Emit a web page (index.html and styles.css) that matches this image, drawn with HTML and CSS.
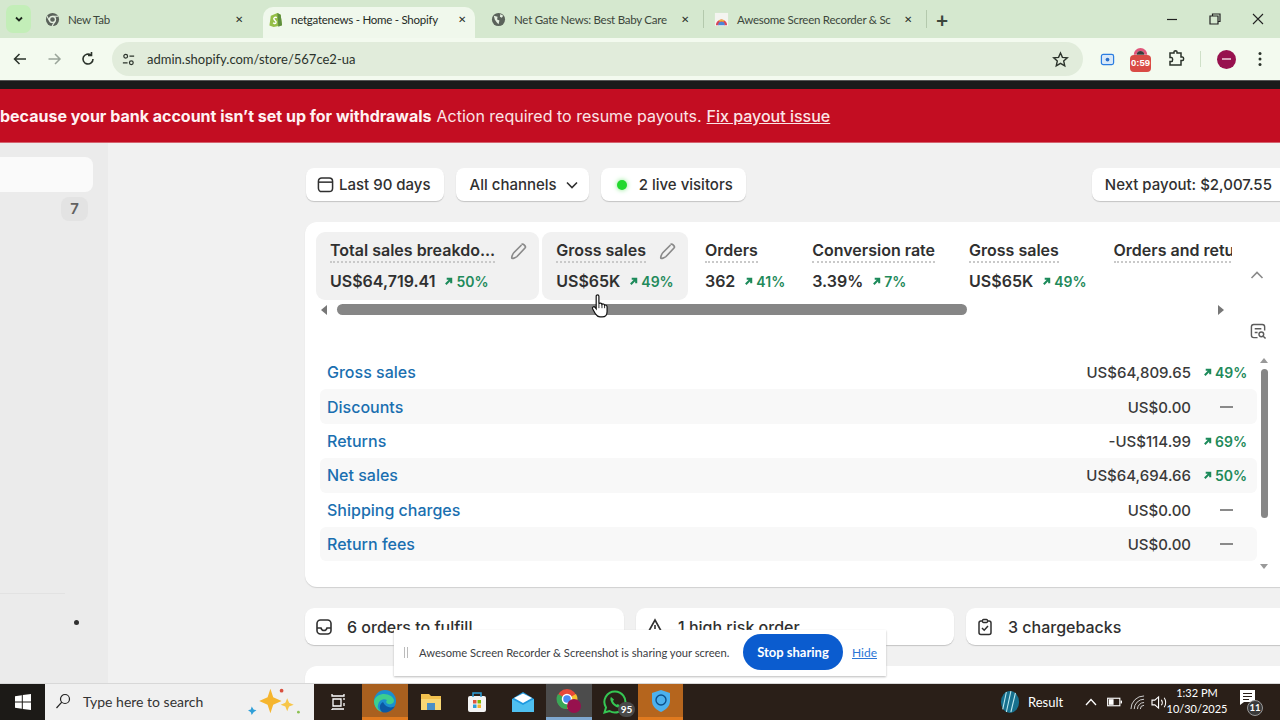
FILE: index.html
```html
<!DOCTYPE html>
<html lang="en">
<head>
  <meta charset="UTF-8">
  <title>netgatenews - Home - Shopify</title>
  <link rel="stylesheet" href="styles.css">
</head>
<body>

  <!-- Browser tabs -->
  <div class="tabstrip">
    <div class="tab-search">
      <svg width="10" height="10" viewBox="0 0 10 10"><path d="M2 3.5 5 6.5 8 3.5" fill="none" stroke="#1f2a1f" stroke-width="1.8"/></svg>
    </div>
    <div class="tab">
      <svg class="favicon" viewBox="0 0 16 16"><circle cx="8" cy="8" r="7" fill="#5a625a"/><circle cx="8" cy="8" r="3.2" fill="#5a625a" stroke="#e4efe0" stroke-width="1.4"/><path d="M8 4.5H14M5 9.8 2.2 4.6M10.8 9.8 7.6 14.8" stroke="#e4efe0" stroke-width="1.2"/></svg>
      <span class="tab-title">New Tab</span>
      <span class="tab-close">✕</span>
    </div>
    <div class="tab active">
      <svg class="favicon" viewBox="0 0 16 16"><path d="M3 4 10 1 13.5 3 15 14 6 16 1.500 14.500Z" fill="#95bf47"/><path d="M10 1 11 15.700 15 14 13.500 3Z" fill="#5e8e3e"/><path d="M9.500 6C7 5 5.500 6.500 6.500 8S9.500 10 8.500 11.500 6 12 5.500 11.500" fill="none" stroke="#fff" stroke-width="1.500"/></svg>
      <span class="tab-title">netgatenews - Home - Shopify</span>
      <span class="tab-close">✕</span>
    </div>
    <div class="tab">
      <svg class="favicon" viewBox="0 0 16 16"><circle cx="8" cy="8" r="7" fill="#5a625a"/><path d="M3 4 7 5 6.500 8 9 9 8 13 6 11 4 8ZM10 2 13 4 11.500 6 9.500 5Z" fill="#e4efe0"/></svg>
      <span class="tab-title">Net Gate News: Best Baby Care</span>
      <span class="tab-close">✕</span>
    </div>
    <div class="tab-sep"></div>
    <div class="tab">
      <svg class="favicon" viewBox="0 0 16 16"><rect x="1" y="1" width="14" height="14" fill="#f4f4f0"/><path d="M2 14A6 6 0 0 1 14 14H11A3 3 0 0 0 5 14Z" fill="#d8475a"/><path d="M4.500 14A3.500 3.500 0 0 1 11.500 14Z" fill="#4a86d8"/><path d="M5 8.800A6 6 0 0 1 11 8.800L10 10.500A3.500 3.500 0 0 0 6 10.500Z" fill="#f0b93a"/></svg>
      <span class="tab-title">Awesome Screen Recorder &amp; Sc</span>
      <span class="tab-close">✕</span>
    </div>
    <div class="tab-sep"></div>
    <span class="tab-new">+</span>
    <div class="window-btns">
      <svg width="12" height="12" viewBox="0 0 12 12"><path d="M1 6.500H11" stroke="#222" stroke-width="1.200"/></svg>
      <svg width="12" height="12" viewBox="0 0 12 12"><path d="M3.500 2.800V1H11V8.500H9M1 3H9V11H1Z" fill="none" stroke="#222" stroke-width="1.200"/></svg>
      <svg width="12" height="12" viewBox="0 0 12 12"><path d="M1 1 11 11M11 1 1 11" stroke="#222" stroke-width="1.100"/></svg>
    </div>
  </div>

  <!-- Address bar -->
  <div class="toolbar">
    <svg class="nav-icon" viewBox="0 0 16 16"><path d="M14 8H2.500M7.500 3 2.500 8 7.500 13" fill="none" stroke="#2b332b" stroke-width="1.500"/></svg>
    <svg class="nav-icon" viewBox="0 0 16 16"><path d="M14 8H2.500M9 3 14 8 9 13" fill="none" stroke="#9aa59a" stroke-width="1.500"/></svg>
    <svg class="nav-icon" viewBox="0 0 16 16"><path d="M13 8A5 5 0 1 1 11 4M11.500 1V4.500H8" fill="none" stroke="#2b332b" stroke-width="1.600"/></svg>
    <div class="omnibox">
      <svg class="site-icon" viewBox="0 0 16 16"><circle cx="5" cy="4.500" r="2" fill="none" stroke="#2b332b" stroke-width="1.300"/><path d="M9 4.500H14M2 11.500H7" stroke="#2b332b" stroke-width="1.300"/><circle cx="11" cy="11.500" r="2" fill="none" stroke="#2b332b" stroke-width="1.300"/></svg>
      <span class="url">admin.shopify.com/store/567ce2-ua</span>
      <svg class="star" viewBox="0 0 16 16"><path d="M8 1.800 9.800 6 14.400 6.400 11 9.400 12 14 8 11.600 4 14 5 9.400 1.600 6.400 6.200 6Z" fill="none" stroke="#2b332b" stroke-width="1.300"/></svg>
    </div>
    <div class="ext-icons">
      <svg class="ext-cast" viewBox="0 0 16 16"><rect x="1.500" y="2.500" width="13" height="11" rx="2" fill="#d8e8f8" stroke="#2a7de1" stroke-width="1.300"/><circle cx="8" cy="8" r="2" fill="#2a6fc9"/></svg>
      <div class="ext-timer">
        <svg class="ext-rainbow" viewBox="0 0 20 10"><path d="M2 10A8 8 0 0 1 18 10H14.500A4.500 4.500 0 0 0 5.500 10Z" fill="#e0567a"/><path d="M5.500 10A4.500 4.500 0 0 1 14.500 10Z" fill="#3b3b3b"/></svg>
        <span class="timer-label">0:59</span>
      </div>
      <svg class="ext-puzzle" viewBox="0 0 18 18"><path d="M3 3H7V1.800C7 .5 10 .5 10 1.800V3H14V7H15.500C17 7 17 10.500 15.500 10.500H14V15H3V11.500H4.500C6 11.500 6 7.500 4.500 7.500H3Z" fill="none" stroke="#2b332b" stroke-width="1.500"/></svg>
      <div class="toolbar-sep"></div>
      <div class="avatar"><span class="avatar-mark"></span></div>
      <svg class="menu-dots" viewBox="0 0 4 16"><circle cx="2" cy="2.500" r="1.500"/><circle cx="2" cy="8" r="1.500"/><circle cx="2" cy="13.500" r="1.500"/></svg>
    </div>
  </div>
  <div class="blackbar"></div>

  <!-- Payout banner -->
  <div class="banner">
    <strong>because your bank account isn’t set up for withdrawals</strong>
    Action required to resume payouts.
    <a class="banner-link" href="#">Fix payout issue</a>
  </div>

  <div class="main">
    <!-- Sidebar, mostly cut off -->
    <div class="sidebar">
      <div class="side-selected"></div>
      <span class="side-badge">7</span>
      <div class="side-rule"></div>
      <span class="side-dot"></span>
    </div>

    <div class="content">
      <div class="filters">
        <div class="pill">
          <svg class="pill-icon" viewBox="0 0 18 18"><rect x="1.500" y="2" width="15" height="14.500" rx="3.500" fill="none" stroke="#303030" stroke-width="1.600"/><path d="M1.500 6.500H16.500" stroke="#303030" stroke-width="1.600"/></svg>
          Last 90 days
        </div>
        <div class="pill pill-channels">
          All channels
          <svg class="pill-caret" viewBox="0 0 14 14"><path d="M2 4.500 7 9.500 12 4.500" fill="none" stroke="#303030" stroke-width="1.600"/></svg>
        </div>
        <div class="pill">
          <span class="live-dot"></span>
          2 live visitors
        </div>
        <div class="pill pill-payout">Next payout: $2,007.55</div>
      </div>

      <div class="card">
        <div class="card-top">
          <div class="metrics-wrap">
            <div class="metrics">
              <div class="metric selected">
                <div class="metric-head">
                  <span class="metric-label label-long">Total sales breakdo...</span>
                  <svg class="pencil" viewBox="0 0 18 18"><path d="M11.500 2.500C13 1 16.500 4.500 15 6L7 14.500C5.500 16 2 17 1.800 16S2.500 12 4 10.500L11.500 3" fill="none" stroke="#8a8a8a" stroke-width="1.700"/></svg>
                </div>
                <div class="metric-value">US$64,719.41 <span class="pct"><svg class="up" viewBox="0 0 10 10"><path d="M2 8 8 2M3 2H8V7" fill="none" stroke="#1c8a5a"/></svg>50%</span></div>
              </div>
              <div class="metric selected">
                <div class="metric-head">
                  <span class="metric-label">Gross sales</span>
                  <svg class="pencil" viewBox="0 0 18 18"><path d="M11.500 2.500C13 1 16.500 4.500 15 6L7 14.500C5.500 16 2 17 1.800 16S2.500 12 4 10.500L11.500 3" fill="none" stroke="#8a8a8a" stroke-width="1.700"/></svg>
                </div>
                <div class="metric-value">US$65K <span class="pct"><svg class="up" viewBox="0 0 10 10"><path d="M2 8 8 2M3 2H8V7" fill="none" stroke="#1c8a5a"/></svg>49%</span></div>
              </div>
              <div class="metric">
                <div class="metric-head"><span class="metric-label">Orders</span></div>
                <div class="metric-value">362 <span class="pct"><svg class="up" viewBox="0 0 10 10"><path d="M2 8 8 2M3 2H8V7" fill="none" stroke="#1c8a5a"/></svg>41%</span></div>
              </div>
              <div class="metric metric-wide">
                <div class="metric-head"><span class="metric-label">Conversion rate</span></div>
                <div class="metric-value">3.39% <span class="pct"><svg class="up" viewBox="0 0 10 10"><path d="M2 8 8 2M3 2H8V7" fill="none" stroke="#1c8a5a"/></svg>7%</span></div>
              </div>
              <div class="metric">
                <div class="metric-head"><span class="metric-label">Gross sales</span></div>
                <div class="metric-value">US$65K <span class="pct"><svg class="up" viewBox="0 0 10 10"><path d="M2 8 8 2M3 2H8V7" fill="none" stroke="#1c8a5a"/></svg>49%</span></div>
              </div>
              <div class="metric">
                <div class="metric-head"><span class="metric-label">Orders and returns</span></div>
              </div>
            </div>
            <div class="hscroll">
              <span class="arrow-left"></span>
              <div class="hscroll-thumb"></div>
              <span class="arrow-right"></span>
            </div>
          </div>
          <div class="rail">
            <svg class="rail-chevron" viewBox="0 0 14 8"><path d="M1.500 7 7 1.500 12.500 7" fill="none" stroke="#8a8a8a" stroke-width="1.600"/></svg>
            <svg class="rail-icon" viewBox="0 0 18 18"><path d="M8 15.500H4C2.500 15.500 1.500 14.500 1.500 13V4C1.500 2.500 2.500 1.500 4 1.500H13C14.500 1.500 15.500 2.500 15.500 4V8M5 6H12M5 10H8" fill="none" stroke="#5c5c5c" stroke-width="1.500"/><circle cx="12" cy="12" r="2.500" fill="none" stroke="#5c5c5c" stroke-width="1.500"/><path d="M14 14 16.500 16.500" stroke="#5c5c5c" stroke-width="1.500"/></svg>
          </div>
        </div>

        <div class="table-wrap">
          <div class="table">
            <div class="row">
              <a class="row-link" href="#">Gross sales</a>
              <span class="amount">US$64,809.65</span>
              <span class="change"><span class="pct"><svg class="up" viewBox="0 0 10 10"><path d="M2 8 8 2M3 2H8V7" fill="none" stroke="#1c8a5a"/></svg>49%</span></span>
            </div>
            <div class="row">
              <a class="row-link" href="#">Discounts</a>
              <span class="amount">US$0.00</span>
              <span class="change"><span class="dash"></span></span>
            </div>
            <div class="row">
              <a class="row-link" href="#">Returns</a>
              <span class="amount">-US$114.99</span>
              <span class="change"><span class="pct"><svg class="up" viewBox="0 0 10 10"><path d="M2 8 8 2M3 2H8V7" fill="none" stroke="#1c8a5a"/></svg>69%</span></span>
            </div>
            <div class="row">
              <a class="row-link" href="#">Net sales</a>
              <span class="amount">US$64,694.66</span>
              <span class="change"><span class="pct"><svg class="up" viewBox="0 0 10 10"><path d="M2 8 8 2M3 2H8V7" fill="none" stroke="#1c8a5a"/></svg>50%</span></span>
            </div>
            <div class="row">
              <a class="row-link" href="#">Shipping charges</a>
              <span class="amount">US$0.00</span>
              <span class="change"><span class="dash"></span></span>
            </div>
            <div class="row">
              <a class="row-link" href="#">Return fees</a>
              <span class="amount">US$0.00</span>
              <span class="change"><span class="dash"></span></span>
            </div>
          </div>
          <div class="vscroll">
            <span class="arrow-up"></span>
            <div class="vscroll-thumb"></div>
            <span class="arrow-down"></span>
          </div>
        </div>
      </div>

      <div class="todo-grid">
        <div class="todo">
          <svg class="todo-icon" viewBox="0 0 18 18"><rect x="2" y="2" width="14" height="14" rx="3.500" fill="none" stroke="#303030" stroke-width="1.600"/><path d="M2 10H6C6.500 12 7.500 12.500 9 12.500S11.500 12 12 10H16" fill="none" stroke="#303030" stroke-width="1.600"/></svg>
          6 orders to fulfill
        </div>
        <div class="todo">
          <svg class="todo-icon" viewBox="0 0 18 18"><path d="M9 2 16.500 15.500H1.500ZM9 7V11" fill="none" stroke="#303030" stroke-width="1.600"/></svg>
          1 high risk order
        </div>
        <div class="todo">
          <svg class="todo-icon" viewBox="0 0 18 18"><rect x="3" y="3" width="12" height="13.500" rx="2" fill="none" stroke="#303030" stroke-width="1.500"/><rect x="6.500" y="1.500" width="5" height="3" rx="1" fill="#fff" stroke="#303030" stroke-width="1.300"/><path d="M6 10 8.200 12.200 12 8" fill="none" stroke="#303030" stroke-width="1.500"/></svg>
          3 chargebacks
        </div>
      </div>
      <div class="card card-next"></div>
    </div>

    <!-- Screen sharing notice -->
    <div class="share-bar">
      <span class="share-grip"></span>
      <span class="share-text">Awesome Screen Recorder &amp; Screenshot is sharing your screen.</span>
      <span class="share-stop">Stop sharing</span>
      <a class="share-hide" href="#">Hide</a>
    </div>

    <!-- Mouse pointer -->
    <svg class="cursor" viewBox="0 0 16 22"><path d="M4.500 2C4.500.5 7 .5 7 2V9C7.500 8 9.500 8 9.800 9.500 10.300 8.800 12 9 12.200 10.300 13 9.800 14.500 10.300 14.500 12V16C14.500 19 13 21 10 21H8C6 21 5 20 4 18.500L1.200 13.500C.5 12 2.500 11 3.500 12.300L4.500 13.500Z" fill="#fff" stroke="#111" stroke-width="1.100"/><path d="M7 9V13M9.800 9.500V13M12.200 10.300V13" stroke="#111" stroke-width=".8"/></svg>
  </div>

  <!-- Windows taskbar -->
  <div class="taskbar">
    <div class="start">
      <svg width="16" height="16" viewBox="0 0 16 16"><path d="M0 2.200 6.800 1.300V7.500H0ZM7.800 1.100 16 0V7.500H7.800ZM0 8.500H6.800V14.700L0 13.800ZM7.800 8.500H16V16L7.800 14.900Z" fill="#fff"/></svg>
    </div>
    <div class="task-search">
      <svg class="search-glass" viewBox="0 0 16 16"><circle cx="10" cy="6" r="4.500" fill="none" stroke="#222" stroke-width="1.200"/><path d="M6.800 9.200 1.500 15" stroke="#222" stroke-width="1.200"/></svg>
      <span class="search-text">Type here to search</span>
      <svg class="search-spark" viewBox="0 0 60 30"><path d="M24 2 27 11 36 15 27 19 24 28 21 19 12 15 21 11Z" fill="#f5b52e"/><path d="M42 12 44 17 49 19 44 21 42 26 40 21 35 19 40 17Z" fill="#f7c64a"/><path d="M4 21 6 24 9 25 6 27 4 30 3 27 0 25 3 24Z" fill="#2f9fd8"/><circle cx="36" cy="4" r="2" fill="#d9503f"/><circle cx="54" cy="27" r="1.500" fill="#8cc152"/></svg>
    </div>
    <div class="task-cell cell-taskview">
      <svg width="18" height="18" viewBox="0 0 18 18"><path d="M3 1V3H15V1M4 6H12V13H4ZM3 16V17M3 16H15M15 5V7M15 10V13" fill="none" stroke="#fff" stroke-width="1.300"/></svg>
    </div>
    <div class="task-cell cell-edge">
      <svg width="24" height="24" viewBox="0 0 24 24"><circle cx="12" cy="12" r="11" fill="#1b8fd0"/><path d="M1 12C3 5 12 3 18 7 22 10 22 14 18 15 14 16 12 13 14 11 10 9 6 11 5 16 4 19 6 21 9 23 4 22 1 17 1 12Z" fill="#3dcf8e"/><path d="M9 23C6 20 6 15 10 13 12 18 18 20 22 17 20 21 14 25 9 23Z" fill="#0c59a4"/></svg>
    </div>
    <div class="task-cell">
      <svg width="22" height="20" viewBox="0 0 22 20"><path d="M1 2H9L11 4H21V18H1Z" fill="#f2c14e"/><path d="M1 7H21V18H1Z" fill="#f8d775"/><rect x="7" y="11" width="8" height="7" fill="#4a8fc7"/></svg>
    </div>
    <div class="task-cell">
      <svg width="20" height="22" viewBox="0 0 20 22"><rect x="1" y="5" width="18" height="16" rx="2" fill="#f4f4f4"/><path d="M6 6V2H14V6" fill="none" stroke="#2d9fd8" stroke-width="1.500"/><rect x="6" y="9" width="3.500" height="3.500" fill="#e2553d"/><rect x="10.500" y="9" width="3.500" height="3.500" fill="#7fba00"/><rect x="6" y="13.500" width="3.500" height="3.500" fill="#2d9fd8"/><rect x="10.500" y="13.500" width="3.500" height="3.500" fill="#f5b52e"/></svg>
    </div>
    <div class="task-cell">
      <svg width="24" height="20" viewBox="0 0 24 20"><path d="M1 7 12 0 23 7V20H1Z" fill="#1f9ae0"/><path d="M1 7 12 13 23 7V20H1Z" fill="#4fc0f0"/><path d="M3 6 12 1.500 21 6 12 11Z" fill="#fff"/></svg>
    </div>
    <div class="task-cell cell-chrome">
      <svg width="26" height="26" viewBox="0 0 26 26"><circle cx="11" cy="11" r="10" fill="#e8493a"/><path d="M11 11 20 6A10 10 0 0 1 11 21Z" fill="#f5c02e"/><path d="M11 11 11 21A10 10 0 0 1 2 6Z" fill="#3aa757"/><circle cx="11" cy="11" r="4.500" fill="#4a8af4" stroke="#fff" stroke-width="1.500"/><circle cx="18" cy="18" r="7" fill="#97114e"/></svg>
    </div>
    <div class="task-cell">
      <svg width="24" height="24" viewBox="0 0 24 24"><path d="M12 1.500A10.500 10.500 0 1 1 6.500 21L1.500 22.500 3 17.500A10.500 10.500 0 0 1 12 1.500Z" fill="none" stroke="#35c653" stroke-width="2"/><path d="M8 7C6.500 9 8 13 11 15.500S16 18 17 16L15 14 13.500 14.800C12 14 10.500 12.500 10 11L11 9.500Z" fill="#35c653"/></svg>
      <span class="wa-badge">95</span>
    </div>
    <div class="task-cell cell-hotspot">
      <svg width="20" height="24" viewBox="0 0 20 24"><path d="M10 1 19 4V12C19 18 14 21 10 23 6 21 1 18 1 12V4Z" fill="#4cb1ee"/><circle cx="10" cy="11" r="5" fill="none" stroke="#0d4f8a" stroke-width="1.400"/></svg>
    </div>
    <div class="tray">
      <svg class="tray-logo" viewBox="0 0 22 24"><ellipse cx="11" cy="12" rx="10" ry="12" fill="#17708e"/><path d="M7 1 3 20M12 0 7 23M17 2 12 23" stroke="#bde8ef" stroke-width="1.200"/></svg>
      <span class="tray-label">Result</span>
      <svg class="tray-caret" viewBox="0 0 12 8"><path d="M1 7 6 1.500 11 7" fill="none" stroke="#fff" stroke-width="1.300"/></svg>
      <svg class="tray-batt" viewBox="0 0 16 10"><rect x=".7" y="1" width="13" height="8" fill="none" stroke="#fff" stroke-width="1.200"/><rect x="2" y="2" width="5" height="6" fill="#fff"/><rect x="14.500" y="3.500" width="1.500" height="3" fill="#fff"/></svg>
      <svg class="tray-wifi" viewBox="0 0 16 16"><path d="M1 15A14 14 0 0 1 15 1M4.500 15A10.500 10.500 0 0 1 15 4.500M8 15A7 7 0 0 1 15 8M11 15A4 4 0 0 1 15 11" fill="none" stroke="#d8d8d8" stroke-width="1"/></svg>
      <svg class="tray-vol" viewBox="0 0 18 16"><path d="M1 5.500H4L8 2V14L4 10.500H1Z" fill="none" stroke="#fff" stroke-width="1.200"/><path d="M11 5C12 6.500 12 9.500 11 11M14 3C16 6 16 10 14 13" fill="none" stroke="#fff" stroke-width="1.100"/></svg>
      <div class="clock"><span>1:32 PM</span><span>10/30/2025</span></div>
      <div class="notify">
        <svg width="15" height="15" viewBox="0 0 15 15"><path d="M0 0H15V12H4L0 15Z" fill="#fff"/><path d="M3 3.500H12M3 6.500H12M3 9.500H9" stroke="#2a1f18" stroke-width="1"/></svg>
        <span class="notify-badge">11</span>
      </div>
    </div>
  </div>

</body>
</html>
```

FILE: styles.css
```css
* {
  box-sizing: border-box;
}

html, body {
  margin: 0;
  height: 720px;
  overflow: hidden;
}

body {
  width: 1280px;
  display: flex;
  flex-direction: column;
  font-family: Inter, "Liberation Sans", sans-serif;
  color: #303030;
  background: #f1f1f1;
}

a {
  text-decoration: none;
}

/* Browser tabs */
.tabstrip {
  height: 38px;
  flex: none;
  display: flex;
  align-items: center;
  background: #d5e8cf;
  font-family: Lato, "Noto Sans", sans-serif;
  font-size: 11.500px;
  letter-spacing: -0.25px;
  color: #3c463c;
}

.tab-search {
  width: 25px;
  height: 28px;
  margin: 0 9px 0 6px;
  display: flex;
  align-items: center;
  justify-content: center;
  background: #c3eeb8;
  border-radius: 7px;
}

.tab {
  width: 212px;
  height: 38px;
  margin-right: 11px;
  padding: 0 4px 0 5px;
  display: flex;
  align-items: center;
}

.tab.active {
  align-self: flex-end;
  height: 31px;
  padding-bottom: 7px;
  background: #f0f8ec;
  border-radius: 10px 10px 0 0;
  color: #1f2a1f;
}

.favicon {
  width: 15px;
  height: 15px;
  flex: none;
  margin-right: 8px;
}

.tab-title {
  flex: 1;
  white-space: nowrap;
  min-width: 0;
}

.tab-close {
  width: 18px;
  margin-left: 4px;
  text-align: center;
  font-size: 10px;
  color: #2b332b;
}

.tab-sep {
  width: 1px;
  height: 18px;
  margin: 0 5px 0 -6px;
  background: #b4c9ad;
}

.tab-new {
  margin-left: 4px;
  font-size: 21px;
  font-weight: 700;
  color: #3c463c;
  line-height: 1;
}

.window-btns {
  margin-left: auto;
  width: 146px;
  padding: 0 16px 0 32px;
  display: flex;
  justify-content: space-between;
}

/* Address bar */
.toolbar {
  height: 43px;
  flex: none;
  padding: 0 0 0 12px;
  display: flex;
  align-items: center;
  background: #f3faef;
  border-bottom: 1px solid #555;
}

.nav-icon {
  width: 16px;
  height: 16px;
  margin-right: 18px;
  flex: none;
}

.omnibox {
  width: 971px;
  height: 34px;
  margin-left: -2px;
  padding: 0 14px 0 9px;
  display: flex;
  align-items: center;
  background: #e1ecdb;
  border-radius: 17px;
  font-family: Lato, "Noto Sans", sans-serif;
  font-size: 13px;
  color: #2b332b;
}

.site-icon {
  width: 15px;
  height: 15px;
  margin-right: 11px;
}

.url {
  flex: 1;
}

.star {
  width: 17px;
  height: 17px;
}

.ext-icons {
  flex: 1;
  padding-left: 16.500px;
  display: flex;
  align-items: center;
  gap: 15.500px;
}

.ext-cast {
  width: 15px;
  height: 15px;
}

.ext-timer {
  width: 21px;
  height: 28px;
  display: flex;
  flex-direction: column;
  align-items: center;
  margin-top: 2px;
}

.ext-rainbow {
  width: 17px;
  height: 9px;
  flex: none;
}

.timer-label {
  width: 21px;
  height: 17px;
  line-height: 16px;
  background: #d94a45;
  border-radius: 4px;
  color: #fff;
  font-family: "Liberation Sans", sans-serif;
  font-size: 9.500px;
  font-weight: 700;
  text-align: center;
}

.ext-puzzle {
  width: 18px;
  height: 18px;
}

.toolbar-sep {
  width: 1px;
  height: 16px;
  background: #cfe0c8;
}

.avatar {
  width: 19px;
  height: 19px;
  border-radius: 50%;
  background: #97114e;
  display: flex;
  align-items: center;
  justify-content: center;
}

.avatar-mark {
  width: 9px;
  height: 2px;
  background: #d9a0b8;
}

.menu-dots {
  width: 4px;
  height: 16px;
  margin-left: 7px;
  fill: #2b332b;
}

.blackbar {
  height: 8px;
  flex: none;
  background: #1a1a1a;
}

/* Payout banner */
.banner {
  height: 54px;
  flex: none;
  padding-top: 1px;
  display: flex;
  align-items: center;
  gap: 5px;
  white-space: nowrap;
  background: #c30d22;
  border-bottom: 1px solid #d5636f;
  color: #fbe4e6;
  font-size: 16px;
}

.banner strong {
  font-weight: 700;
  color: #fff1f2;
}

.banner-link {
  color: #fbe4e6;
  font-weight: 500;
  text-decoration: underline;
}

/* Main area */
.main {
  flex: 1;
  min-height: 0;
  display: flex;
  position: relative;
  overflow: hidden;
  background: #f1f1f1;
}

.sidebar {
  width: 108px;
  flex: none;
  padding-top: 14px;
  display: flex;
  flex-direction: column;
  background: #ebebeb;
}

.side-selected {
  width: 93px;
  height: 35px;
  background: #fafafa;
  border-radius: 0 8px 8px 0;
}

.side-badge {
  width: 27px;
  height: 24px;
  margin: 5px 0 0 61px;
  line-height: 24px;
  background: #e3e3e3;
  border-radius: 8px;
  font-size: 15px;
  font-weight: 600;
  color: #616161;
  text-align: center;
}

.side-rule {
  width: 65px;
  height: 1px;
  margin-top: 372px;
  background: #e2e2e2;
}

.side-dot {
  width: 5px;
  height: 5px;
  margin: 26px 0 0 74px;
  border-radius: 50%;
  background: #303030;
}

.content {
  width: 990px;
  flex: none;
  padding: 25px 0 0 197px;
  box-sizing: content-box;
}

.filters {
  display: flex;
  gap: 12px;
  padding-left: 1px;
}

.pill {
  height: 33px;
  padding: 0 13px 0 11px;
  display: flex;
  align-items: center;
  background: #fff;
  border-radius: 8px;
  box-shadow: 0 1px 1px #c4c4c4;
  font-size: 15px;
  font-weight: 500;
  white-space: nowrap;
}

.pill-channels {
  padding: 0 10px 0 14px;
}

.pill-icon {
  width: 17px;
  height: 17px;
  margin-right: 5px;
}

.pill-caret {
  width: 14px;
  height: 14px;
  margin-left: 8px;
}

.live-dot {
  width: 10px;
  height: 10px;
  margin: 0 12px 0 5px;
  border-radius: 50%;
  background: #22d82e;
  box-shadow: 0 0 5px #7fe884;
}

.pill-payout {
  margin-left: 334px;
  width: 200px;
  padding-left: 13px;
}

.card {
  width: 990px;
  height: 365px;
  margin-top: 21px;
  padding: 10px 0 0 11px;
  background: #fff;
  border-radius: 12px;
  box-shadow: 0 1px 1px #d0d0d0;
}

.card-top {
  display: flex;
  height: 123.100px;
}

.metrics-wrap {
  width: 916px;
  flex: none;
}

.metrics {
  display: flex;
  gap: 3px;
  overflow: hidden;
  height: 68px;
}

.metric {
  flex: none;
  height: 68px;
  padding: 7px 10px 0 14px;
  border-radius: 9px;
}

.metric.selected {
  padding-right: 14px;
  background: #f1f1f1;
}

.metric-wide {
  padding-right: 17px;
}

.metric-head {
  display: flex;
  align-items: center;
  justify-content: space-between;
  gap: 13px;
}

.metric-label {
  font-size: 16px;
  font-weight: 600;
  line-height: 22px;
  white-space: nowrap;
  border-bottom: 2px dotted #c9c9c9;
}

.label-long {
  margin-right: 2px;
}

.pencil {
  width: 18px;
  height: 18px;
  margin-right: -3px;
  flex: none;
}

.metric-value {
  margin-top: 8px;
  font-size: 16px;
  font-weight: 600;
  white-space: nowrap;
  display: flex;
  align-items: center;
  gap: 9px;
}

.pct {
  display: inline-flex;
  align-items: center;
  gap: 3px;
  color: #1f8a5b;
  font-size: 14px;
  font-weight: 600;
}

.up {
  width: 9px;
  height: 9px;
}

.up path {
  stroke-width: 2.300;
}

.hscroll {
  height: 11px;
  margin-top: 4px;
  display: flex;
  align-items: center;
}

.arrow-left {
  margin-left: 5px;
  border: 5px solid transparent;
  border-left: 0;
  border-right: 6px solid #777;
}

.hscroll-thumb {
  width: 630px;
  height: 11px;
  margin-left: 10px;
  background: #868686;
  border-radius: 6px;
}

.arrow-right {
  margin-left: 251px;
  border: 5px solid transparent;
  border-right: 0;
  border-left: 6px solid #777;
}

.rail {
  flex: 1;
  padding: 39px 0 0 18px;
  display: flex;
  flex-direction: column;
}

.rail-chevron {
  width: 14px;
  height: 8px;
}

.rail-icon {
  width: 17px;
  height: 17px;
  margin-top: 44px;
}

.table-wrap {
  display: flex;
}

.table {
  width: 937px;
  flex: none;
  margin-left: 4px;
}

.row {
  height: 34.400px;
  padding-left: 7px;
  display: grid;
  grid-template-columns: 1fr auto 66px;
  align-items: center;
  border-radius: 6px;
}

.row:nth-child(even) {
  background: #f8f8f8;
}

.row-link {
  color: #1a6fb0;
  font-size: 16px;
  font-weight: 500;
}

.amount {
  margin-top: 1px;
  font-size: 15px;
  font-weight: 500;
  color: #3a3a3a;
}

.change {
  padding-left: 12px;
  display: flex;
  align-items: center;
}

.dash {
  width: 13px;
  height: 2px;
  margin-left: 17px;
  background: #8a8a8a;
}

.vscroll {
  width: 12px;
  margin-left: 1px;
  display: flex;
  flex-direction: column;
  align-items: center;
}

.arrow-up {
  margin-top: 3px;
  border: 4px solid transparent;
  border-top: 0;
  border-bottom: 5px solid #999;
}

.vscroll-thumb {
  width: 7px;
  height: 149px;
  margin-top: 6px;
  background: #868686;
  border-radius: 4px;
}

.arrow-down {
  margin-top: 46px;
  border: 4px solid transparent;
  border-bottom: 0;
  border-top: 5px solid #999;
}

/* Alerts under the card */
.todo-grid {
  width: 990px;
  margin-top: 21px;
  display: grid;
  grid-template-columns: 319px 318px 341px;
  gap: 12px;
}

.todo {
  height: 37px;
  padding-left: 10px;
  display: flex;
  align-items: center;
  background: #fff;
  border-radius: 9px;
  box-shadow: 0 1px 1px #c4c4c4;
  font-size: 16px;
  font-weight: 500;
}

.todo-icon {
  width: 18px;
  height: 18px;
  margin-right: 14px;
}

.card-next {
  height: 80px;
}

/* Screen sharing notice */
.share-bar {
  position: absolute;
  left: 394px;
  top: 487px;
  width: 492px;
  height: 46px;
  padding: 0 0 2px 10px;
  display: flex;
  align-items: center;
  background: #fff;
  box-shadow: 0 1px 2px #bbb;
  font-family: Lato, "Noto Sans", sans-serif;
  font-size: 11.200px;
  color: #3c4043;
}

.share-grip {
  width: 4px;
  height: 11px;
  margin-right: 11px;
  border-left: 1px solid #bbb;
  border-right: 1px solid #bbb;
}

.share-text {
  width: 324px;
  white-space: nowrap;
}

.share-stop {
  width: 100px;
  height: 36px;
  line-height: 36px;
  background: #0b5ccf;
  border-radius: 18px;
  color: #fff;
  font-size: 13px;
  font-weight: 700;
  text-align: center;
}

.share-hide {
  margin-left: 9px;
  color: #2a76d6;
  font-size: 12px;
  text-decoration: underline;
}

.cursor {
  position: absolute;
  left: 591px;
  top: 151px;
  width: 18px;
  height: 24px;
}

/* Windows taskbar */
.taskbar {
  height: 37px;
  flex: none;
  display: flex;
  align-items: stretch;
  background: #2a1f18;
  border-top: 1px solid #d8d8d8;
  font-family: Lato, "Noto Sans", sans-serif;
  color: #fff;
}

.start {
  width: 45px;
  display: flex;
  align-items: center;
  justify-content: center;
  background: #1c1a17;
}

.task-search {
  width: 269px;
  padding: 0 8px 2px 10px;
  display: flex;
  align-items: center;
  background: #f0f0f0;
  color: #333;
  font-size: 14px;
}

.search-glass {
  width: 16px;
  height: 16px;
  margin-right: 12px;
}

.search-text {
  flex: 1;
  white-space: nowrap;
}

.search-spark {
  width: 60px;
  height: 28px;
}

.task-cell {
  width: 46px;
  display: flex;
  align-items: center;
  justify-content: center;
  position: relative;
}

.cell-taskview {
  width: 48px;
}

.cell-edge {
  background: #a9601f;
  border-bottom: 3px solid #e07a1f;
}

.cell-chrome {
  background: #4c4c4c;
  border-bottom: 3px solid #7fa8d0;
}

.cell-hotspot {
  width: 45px;
  background: #b5651d;
  border-bottom: 3px solid #e07a1f;
}

.wa-badge {
  position: absolute;
  right: 3px;
  bottom: 3px;
  width: 17px;
  height: 15px;
  line-height: 15px;
  border-radius: 8px;
  background: #4a4a4a;
  font-size: 10px;
  font-weight: 700;
  text-align: center;
}

.tray {
  flex: 1;
  padding-left: 317px;
  display: flex;
  align-items: center;
  font-size: 13px;
}

.tray-logo {
  width: 20px;
  height: 24px;
  margin-right: 8px;
  flex: none;
}

.tray-label {
  width: 57px;
}

.tray-caret {
  width: 12px;
  height: 8px;
  margin-right: 9.500px;
}

.tray-batt {
  width: 15px;
  height: 10px;
  margin-right: 8px;
}

.tray-wifi {
  width: 15px;
  height: 15px;
  margin-right: 6px;
}

.tray-vol {
  width: 17px;
  height: 15px;
  flex: none;
}

.clock {
  width: 62px;
  margin-left: -1.500px;
  padding-bottom: 2px;
  display: flex;
  flex-direction: column;
  align-items: center;
  font-size: 11px;
  line-height: 16px;
}

.notify {
  margin-left: 12px;
  position: relative;
  width: 24px;
  height: 24px;
  flex: none;
}

.notify-badge {
  position: absolute;
  right: 1px;
  bottom: -2px;
  width: 16px;
  height: 16px;
  line-height: 14px;
  border: 1px solid #999;
  border-radius: 50%;
  background: #3a3a3a;
  font-size: 9.500px;
  font-weight: 700;
  text-align: center;
}
```
